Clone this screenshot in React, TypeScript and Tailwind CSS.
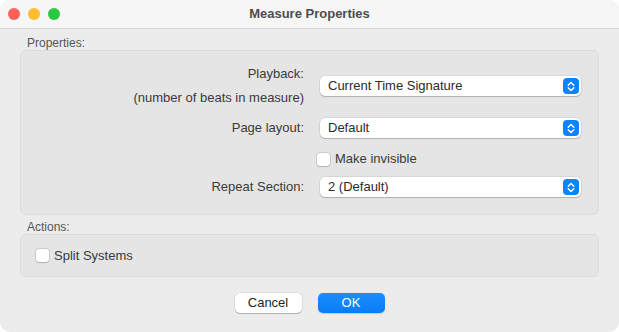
import React from 'react';

const font = { fontFamily: '"Liberation Sans", Arial, sans-serif' };

const Stepper = () => (
  <div className="absolute right-[2px] top-[2px] w-[16px] h-[16px] rounded-[4px] bg-[#0d84ff] flex items-center justify-center">
    <svg width="8" height="11" viewBox="0 0 8 11" fill="none">
      <path d="M1.2 4.2 L4 1.4 L6.8 4.2" stroke="white" strokeWidth="1.4" strokeLinecap="round" strokeLinejoin="round" />
      <path d="M1.2 6.8 L4 9.6 L6.8 6.8" stroke="white" strokeWidth="1.4" strokeLinecap="round" strokeLinejoin="round" />
    </svg>
  </div>
);

const Select = ({ value }: { value: string }) => (
  <div className="relative w-[261px] h-[20px] rounded-[5px] bg-white shadow-[0_0_0_0.5px_rgba(0,0,0,0.12),0_1px_1px_rgba(0,0,0,0.18)] flex items-center pl-[8px] text-[13px] text-[#2b2b2b]">
    {value}
    <Stepper />
  </div>
);

const Checkbox = () => (
  <div className="w-[13px] h-[13px] rounded-[3px] bg-white shadow-[0_0_0_0.5px_rgba(0,0,0,0.2),0_0.5px_1px_rgba(0,0,0,0.15)]" />
);

const Row = ({ label, children }: { label: React.ReactNode; children: React.ReactNode }) => (
  <div className="flex items-center">
    <div className="w-[283px] text-right text-[13px] text-[#3a3a3a]">{label}</div>
    <div className="ml-[16px]">{children}</div>
  </div>
);

export default function App() {
  return (
    <div className="w-[619px] h-[332px] bg-white" style={font}>
      <div className="w-full h-full rounded-[10px] overflow-hidden bg-[#ececec] flex flex-col">
        <div className="relative h-[29px] bg-[#f6f6f6] border-b border-[#d3d3d3] flex items-center justify-center">
          <div className="absolute left-[8px] top-[8px] flex gap-[8px]">
            <div className="w-[12px] h-[12px] rounded-full bg-[#fe5f57]" />
            <div className="w-[12px] h-[12px] rounded-full bg-[#febc2e]" />
            <div className="w-[12px] h-[12px] rounded-full bg-[#28c840]" />
          </div>
          <span className="text-[13px] font-bold text-[#4d4d4d]">Measure Properties</span>
        </div>

        <div className="px-[20px] flex flex-col">
          <div className="mt-[8px] h-[13px] leading-[13px] pl-[7px] text-[12px] text-[#555]">Properties:</div>
          <div className="h-[165px] rounded-[6px] border border-[#dcdcdc] bg-[#e5e5e5] pt-[11px] flex flex-col">
            <Row
              label={
                <div className="leading-[24px]">
                  <div>Playback:</div>
                  <div>(number of beats in measure)</div>
                </div>
              }
            >
              <Select value="Current Time Signature" />
            </Row>
            <div className="mt-[8px]">
              <Row label="Page layout:">
                <Select value="Default" />
              </Row>
            </div>
            <div className="mt-[11px] h-[20px] flex items-center pl-[296px] gap-[5px] text-[13px] text-[#3a3a3a]">
              <Checkbox />
              <span>Make invisible</span>
            </div>
            <div className="mt-[8px]">
              <Row label="Repeat Section:">
                <Select value="2 (Default)" />
              </Row>
            </div>
          </div>

          <div className="mt-[6px] h-[13px] leading-[13px] pl-[7px] text-[12px] text-[#555]">Actions:</div>
          <div className="h-[43px] rounded-[6px] border border-[#dcdcdc] bg-[#e5e5e5] flex items-center pl-[15px] gap-[5px] text-[13px] text-[#3a3a3a]">
            <Checkbox />
            <span>Split Systems</span>
          </div>

          <div className="mt-[16px] flex justify-center gap-[16px]">
            <button className="w-[67px] h-[20px] rounded-[5px] bg-white text-[13px] text-[#1f1f1f] shadow-[0_0_0_0.5px_rgba(0,0,0,0.12),0_1px_1px_rgba(0,0,0,0.2)]">
              Cancel
            </button>
            <button className="w-[67px] h-[20px] rounded-[5px] bg-gradient-to-b from-[#1a8eff] to-[#0a7cf5] text-[13px] text-white shadow-[0_0.5px_1px_rgba(0,0,0,0.15)]">
              OK
            </button>
          </div>
        </div>
      </div>
    </div>
  );
}
